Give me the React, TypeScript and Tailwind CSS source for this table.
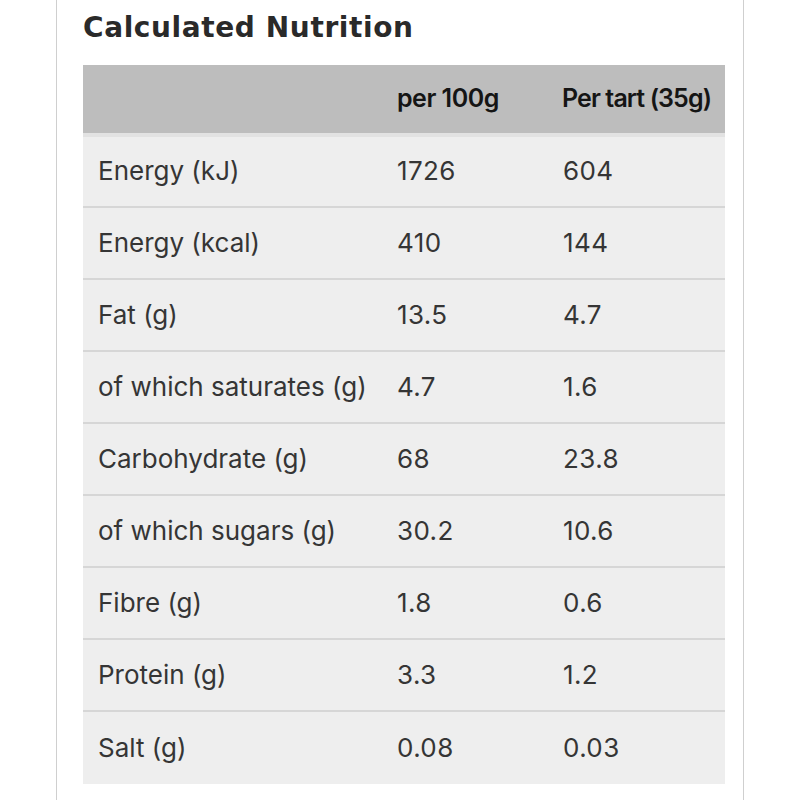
const ROWS: [string, string, string][] = [
  ["Energy (kJ)", "1726", "604"],
  ["Energy (kcal)", "410", "144"],
  ["Fat (g)", "13.5", "4.7"],
  ["of which saturates (g)", "4.7", "1.6"],
  ["Carbohydrate (g)", "68", "23.8"],
  ["of which sugars (g)", "30.2", "10.6"],
  ["Fibre (g)", "1.8", "0.6"],
  ["Protein (g)", "3.3", "1.2"],
  ["Salt (g)", "0.08", "0.03"],
];

const App = () => {
  return (
    <div className="min-h-[800px] bg-white">
      <div className="ml-[56px] w-[688px] min-h-[800px] border-x border-[#cfcfcf] pl-[26px] pr-[17px]">
        <h2 className="pt-[13px] pb-[22px] text-[28px] leading-[30px] font-bold text-[#2a2a2a] font-['DejaVu_Sans',sans-serif] tracking-[0.6px]">
          Calculated Nutrition
        </h2>
        <table className="w-[642px] table-fixed border-collapse font-['Inter',sans-serif] text-[26px]">
          <colgroup>
            <col className="w-[300px]" />
            <col className="w-[165px]" />
            <col className="w-[177px]" />
          </colgroup>
          <thead>
            <tr className="h-[70px] bg-[#bdbdbd] border-b-4 border-[#e2e2e2]">
              <th className="px-[15px]" />
              <th className="px-[14px] text-left text-[25px] font-semibold text-[#151515] tracking-[-0.5px]">per 100g</th>
              <th className="px-[14px] text-left text-[25px] font-semibold text-[#151515] tracking-[-0.9px] whitespace-nowrap">Per tart (35g)</th>
            </tr>
          </thead>
          <tbody>
            {ROWS.map(([label, per100, perTart], i) => (
              <tr
                key={label}
                className={
                  i < ROWS.length - 1
                    ? "h-[72px] bg-[#eeeeee] border-b-2 border-[#d6d6d6]"
                    : "h-[73px] bg-[#eeeeee]"
                }
              >
                <td className="px-[15px] pb-[2px] text-[#353535] whitespace-nowrap">{label}</td>
                <td className="px-[14px] pb-[2px] text-[#353535] tracking-[0.4px]">{per100}</td>
                <td className="px-[15px] pb-[2px] text-[#353535] tracking-[0.4px]">{perTart}</td>
              </tr>
            ))}
          </tbody>
        </table>
      </div>
    </div>
  );
};

export default App;
